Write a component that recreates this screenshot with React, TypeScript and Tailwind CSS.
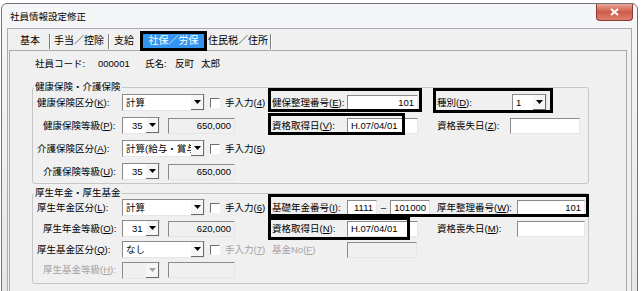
import React from "react";

// mnemonic label: 健康保険区分(K):
function Mn({ text, k, colon = true }: { text: string; k: string; colon?: boolean }) {
  return (
    <span className="whitespace-nowrap">
      {text}(<u className="underline-offset-[1px]">{k}</u>){colon ? ":" : ""}
    </span>
  );
}

function Field({
  value = "",
  w,
  right = false,
  ro = false,
  disabled = false,
  className = "",
}: {
  value?: string;
  w: string;
  right?: boolean;
  ro?: boolean;
  disabled?: boolean;
  className?: string;
}) {
  return (
    <div
      className={`${w} h-[16px] flex items-center whitespace-nowrap border border-t-[#8a8a8a] border-l-[#8a8a8a] border-r-[#e6e6e6] border-b-[#e6e6e6] ${
        ro || disabled ? "bg-[#f0f0f0]" : "bg-white"
      } ${right ? "justify-end pr-[3px]" : "pl-[3px]"} ${className}`}
    >
      {value}
    </div>
  );
}

function Select({
  value = "",
  w,
  num = false,
  disabled = false,
}: {
  value?: string;
  w: string;
  num?: boolean;
  disabled?: boolean;
}) {
  return (
    <div
      className={`${w} h-[17px] flex border border-t-[#8a8a8a] border-l-[#8a8a8a] border-r-[#e6e6e6] border-b-[#e6e6e6] ${
        disabled ? "bg-[#f0f0f0]" : "bg-white"
      }`}
    >
      <div className={`flex-1 flex items-center overflow-hidden whitespace-nowrap ${num ? "pl-[9px]" : "pl-[3px]"}`}>
        {value}
      </div>
      <div className="w-[13px] flex items-center justify-center border-r border-b border-[#6a6a6a] bg-[#f6f6f6]">
        <svg width="7" height="4" viewBox="0 0 7 4">
          <path d="M0 0h7L3.5 4z" fill={disabled ? "#a0a0a0" : "#000"} />
        </svg>
      </div>
    </div>
  );
}

function Check({ n, disabled = false }: { n: string; disabled?: boolean }) {
  return (
    <div className="flex items-center ml-[5px]">
      <div className="w-[10px] h-[10px] border border-t-[#6f6f6f] border-l-[#6f6f6f] border-r-white border-b-white bg-white" />
      <span className={`ml-[5px] whitespace-nowrap ${disabled ? "text-[#a3a3a3]" : ""}`}>
        手入力(<u className="underline-offset-[1px]">{n}</u>)
      </span>
    </div>
  );
}

// black annotation frame drawn over the form
function Mark({ className }: { className: string }) {
  return <div className={`absolute border-[3px] border-black pointer-events-none ${className}`} />;
}

function Sep() {
  return <div className="w-[2px] h-[15px] border-l border-[#7c7c7c] border-r border-r-white" />;
}

export default function App() {
  return (
    <div className="w-[643px] h-[291px] overflow-hidden bg-white font-['Liberation_Sans','Noto_Sans_CJK_JP',sans-serif] text-[9.5px] leading-none text-black">
      <div className="ml-[1px] mt-[3px] w-[637px] h-[320px] rounded-t-[6px] border border-[#70757b] bg-gradient-to-b from-[#f5f6f7] to-[#e3e6e9] flex flex-col">
        {/* title bar */}
        <div className="h-[24px] shrink-0 flex justify-between">
          <div className="pl-[8px] pt-[8px] text-[9.5px]">社員情報設定修正</div>
          <div className="mr-[4px] w-[37px] h-[17px] rounded-b-[4px] border border-t-0 border-[#8a3a30] bg-gradient-to-b from-[#e9a798] via-[#cd5a48] to-[#d9806c] flex items-center justify-center">
            <svg width="9" height="8" viewBox="0 0 9 8">
              <path d="M1 1l7 6M8 1L1 7" stroke="#fff" strokeWidth="2" />
            </svg>
          </div>
        </div>

        {/* client area */}
        <div className="mx-[5px] flex-1 border border-[#a7acb2] bg-[#f0f0f0]">
          {/* tabs */}
          <div className="relative z-10 mt-[2px] h-[20px] flex items-center pl-[12px] text-[10px]">
            <span>基本</span>
            <div className="ml-[9px]"><Sep /></div>
            <span className="ml-[3px]">手当／控除</span>
            <div className="ml-[4px]"><Sep /></div>
            <span className="ml-[4px]">支給</span>
            <div className="ml-[6px] w-[67px] h-[20px] border-[3px] border-black bg-[#3394f2] text-white flex items-center justify-center">
              社保／労保
            </div>
            <span className="ml-[1px]">住民税／住所</span>
            <div className="ml-[2px]"><Sep /></div>
          </div>

          {/* tab panel */}
          <div className="-mt-[1px] ml-[1px] mr-[4px] h-[260px] border border-[#a9a9a9] bg-[#f0f0f0]">
            <div className="mt-[5px] h-[16px] pl-[25px] flex items-center">
              <span className="w-[63px]">社員コード:</span>
              <span className="w-[47px]">000001</span>
              <span className="w-[30px]">氏名:</span>
              <span>反町</span>
              <span className="ml-[7px]">太郎</span>
            </div>

            {/* 健康保険・介護保険 */}
            <fieldset className="mt-[11px] ml-[22px] w-[557px] border border-[#c6c6c6] rounded-[3px]">
              <legend className="ml-[1px] px-[1px] leading-[8px]">健康保険・介護保険</legend>

              <div className="relative h-[23px] flex items-center">
                <div className="w-[89px] pl-[4px]"><Mn text="健康保険区分" k="K" /></div>
                <div className="w-[146px] flex items-center">
                  <Select w="w-[83px]" value="計算" />
                  <Check n="4" />
                </div>
                <div className="w-[165px] flex items-center">
                  <div className="w-[79px] pl-[4px]"><Mn text="健保整理番号" k="E" /></div>
                  <Field w="w-[71px]" right value="101" />
                </div>
                <div className="flex items-center">
                  <div className="w-[79px] pl-[4px]"><Mn text="種別" k="D" /></div>
                  <Select w="w-[35px]" value="1" />
                </div>
                <Mark className="left-[235px] top-[-3px] w-[154px] h-[24px]" />
                <Mark className="left-[400px] top-[-3px] w-[120px] h-[25px]" />
              </div>

              <div className="relative h-[23px] flex items-center">
                <div className="w-[89px] pl-[10px]"><Mn text="健康保険等級" k="P" /></div>
                <div className="w-[146px] flex items-center">
                  <Select w="w-[38px]" num value="35" />
                  <Field w="w-[67px]" className="ml-[8px]" ro right value="650,000" />
                </div>
                <div className="w-[165px] flex items-center">
                  <div className="w-[79px] pl-[4px]"><Mn text="資格取得日" k="V" /></div>
                  <Field w="w-[71px]" value="H.07/04/01" />
                </div>
                <div className="flex items-center">
                  <div className="w-[77px] pl-[4px]"><Mn text="資格喪失日" k="Z" /></div>
                  <Field w="w-[70px]" />
                </div>
                <Mark className="left-[235px] top-[-1px] w-[137px] h-[22px]" />
              </div>

              <div className="relative h-[23px] flex items-center">
                <div className="w-[89px] pl-[4px]"><Mn text="介護保険区分" k="A" /></div>
                <div className="w-[146px] flex items-center">
                  <Select w="w-[83px]" value="計算(給与・賞与" />
                  <Check n="5" />
                </div>
              </div>

              <div className="relative h-[23px] flex items-center">
                <div className="w-[89px] pl-[10px]"><Mn text="介護保険等級" k="U" /></div>
                <div className="w-[146px] flex items-center">
                  <Select w="w-[38px]" num value="35" />
                  <Field w="w-[67px]" className="ml-[8px]" ro right value="650,000" />
                </div>
              </div>
            </fieldset>

            {/* 厚生年金・厚生基金 */}
            <fieldset className="mt-[5px] ml-[22px] w-[557px] pb-[3px] border border-[#c6c6c6] rounded-[3px]">
              <legend className="ml-[1px] px-[1px] leading-[8px]">厚生年金・厚生基金</legend>

              <div className="relative h-[21px] flex items-center">
                <div className="w-[89px] pl-[4px]"><Mn text="厚生年金区分" k="L" /></div>
                <div className="w-[146px] flex items-center">
                  <Select w="w-[83px]" value="計算" />
                  <Check n="6" />
                </div>
                <div className="w-[165px] flex items-center">
                  <div className="w-[79px] pl-[4px]"><Mn text="基礎年金番号" k="I" /></div>
                  <Field w="w-[30px]" right value="1111" />
                  <span className="w-[13px] text-center">–</span>
                  <Field w="w-[40px]" right value="101000" />
                </div>
                <div className="flex items-center">
                  <div className="w-[84px] pl-[4px]"><Mn text="厚年整理番号" k="W" /></div>
                  <Field w="w-[68px]" right value="101" />
                </div>
                <Mark className="left-[235px] top-[-3px] w-[321px] h-[23px]" />
              </div>

              <div className="relative h-[21px] flex items-center">
                <div className="w-[89px] pl-[10px]"><Mn text="厚生年金等級" k="O" /></div>
                <div className="w-[146px] flex items-center">
                  <Select w="w-[38px]" num value="31" />
                  <Field w="w-[67px]" className="ml-[8px]" ro right value="620,000" />
                </div>
                <div className="w-[165px] flex items-center">
                  <div className="w-[79px] pl-[4px]"><Mn text="資格取得日" k="N" /></div>
                  <Field w="w-[71px]" value="H.07/04/01" />
                </div>
                <div className="flex items-center">
                  <div className="w-[84px] pl-[4px]"><Mn text="資格喪失日" k="M" /></div>
                  <Field w="w-[68px]" />
                </div>
                <Mark className="left-[235px] top-[-1px] w-[142px] h-[23px]" />
              </div>

              <div className="relative h-[21px] flex items-center">
                <div className="w-[89px] pl-[4px]"><Mn text="厚生基金区分" k="Q" /></div>
                <div className="w-[146px] flex items-center">
                  <Select w="w-[83px]" value="なし" />
                  <Check n="7" disabled />
                </div>
                <div className="w-[165px] flex items-center">
                  <div className="w-[79px] pl-[4px] text-[#a3a3a3]">
                    <Mn text="基金No" k="F" colon={false} />
                  </div>
                  <Field w="w-[70px]" disabled />
                </div>
              </div>

              <div className="relative h-[20px] flex items-center">
                <div className="w-[89px] pl-[10px] text-[#a3a3a3]"><Mn text="厚生基金等級" k="H" /></div>
                <div className="w-[146px] flex items-center">
                  <Select w="w-[38px]" disabled />
                  <Field w="w-[67px]" className="ml-[8px]" disabled />
                </div>
              </div>
            </fieldset>
          </div>
        </div>
      </div>
    </div>
  );
}
